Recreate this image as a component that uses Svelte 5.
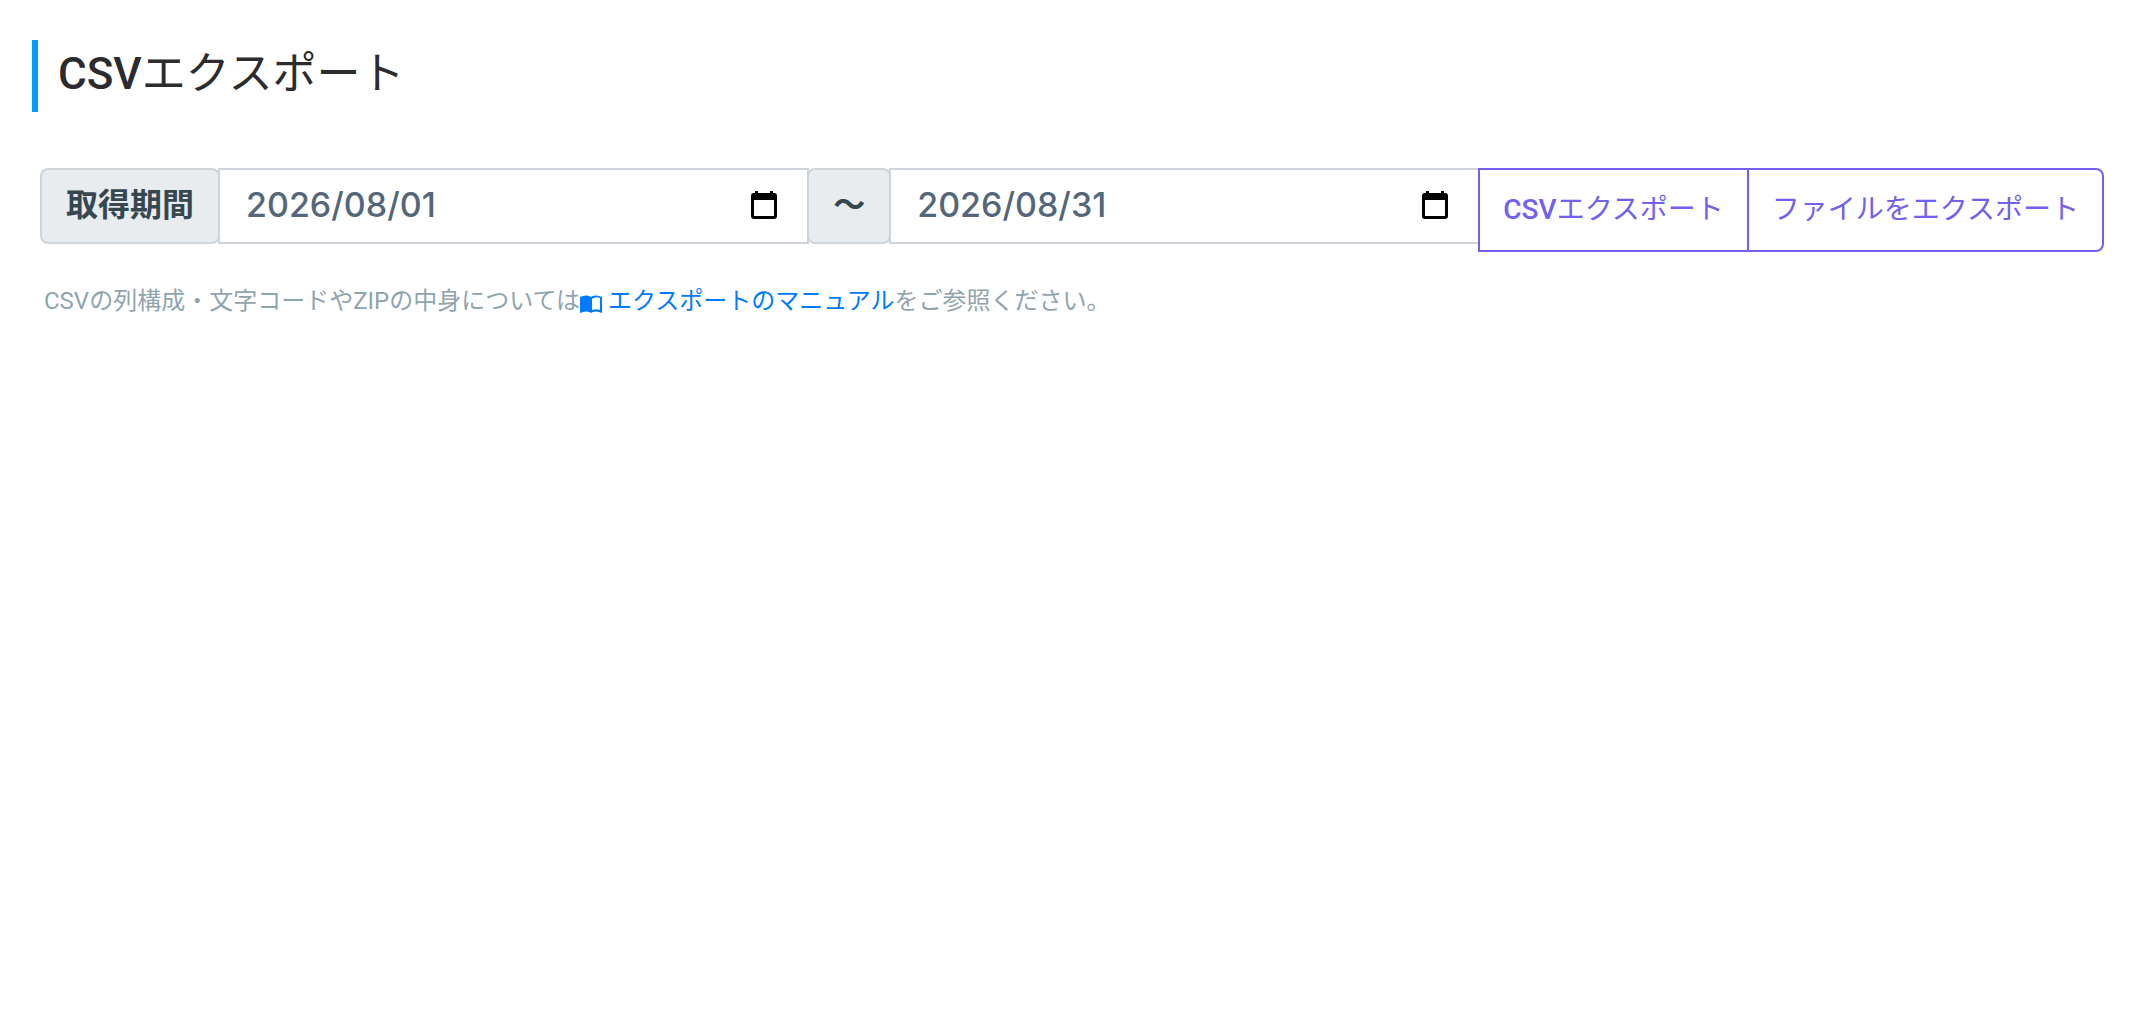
<script>
  let startDate = '2026/08/01';
  let endDate = '2026/08/31';
</script>

<svelte:head>
  <title>CSVエクスポート</title>
</svelte:head>

<main>
  <h1><span class="latin">CSV</span>エクスポート</h1>

  <form class="input-group" on:submit|preventDefault>
    <label class="addon" for="start-date">取得期間</label>
    <div class="date-field">
      <input id="start-date" type="text" bind:value={startDate}>
      <button type="button" class="picker" aria-label="開始日を選択">
        <svg viewBox="0 0 26 28" width="26" height="28">
          <path fill-rule="evenodd" d="M4 0h3v2h12V0h3v2h1a3 3 0 0 1 3 3v20a3 3 0 0 1-3 3H3a3 3 0 0 1-3-3V5a3 3 0 0 1 3-3h1zM3 9v16h20V9z" />
        </svg>
      </button>
    </div>
    <label class="addon" for="end-date">〜</label>
    <div class="date-field">
      <input id="end-date" type="text" bind:value={endDate}>
      <button type="button" class="picker" aria-label="終了日を選択">
        <svg viewBox="0 0 26 28" width="26" height="28">
          <path fill-rule="evenodd" d="M4 0h3v2h12V0h3v2h1a3 3 0 0 1 3 3v20a3 3 0 0 1-3 3H3a3 3 0 0 1-3-3V5a3 3 0 0 1 3-3h1zM3 9v16h20V9z" />
        </svg>
      </button>
    </div>
    <button type="submit" class="btn"><span class="latin">CSV</span>エクスポート</button>
    <button type="button" class="btn">ファイルをエクスポート</button>
  </form>

  <p class="help">CSVの列構成・文字コードやZIPの中身については<a href="#manual"><svg class="book" viewBox="0 0 22 18" width="22" height="18"><path fill-rule="evenodd" d="M0 2C4 0 8 0 11 2c3-2 7-2 11 0v16c-4-2-8-2-11 0-3-2-7-2-11 0zM12 4v11c3-1 5-1 8 0V3c-3-1-5-1-8 1z" /></svg>エクスポートのマニュアル</a>をご参照ください。</p>
</main>

<style>
  :global(body) {
    margin: 0;
    background: #fff;
  }

  main {
    padding: 40px 40px 40px 32px;
    font-family: Roboto, 'Noto Sans CJK JP', sans-serif;
  }

  h1 {
    box-sizing: border-box;
    margin: 0 0 56px;
    padding: 0 0 4px 20px;
    border-left: 6px solid #009efb;
    color: #2c2b2e;
    font-size: 44px;
    font-weight: 400;
    line-height: 68px;
  }

  .latin {
    font-weight: 500;
  }

  .input-group {
    display: flex;
    align-items: flex-start;
    margin-left: 8px;
  }

  /* neighbours share one border */
  .input-group > * + * {
    margin-left: -2px;
  }

  .addon,
  .date-field,
  .btn {
    box-sizing: border-box;
    border: 2px solid #ced4da;
    white-space: nowrap;
  }

  .addon {
    flex: none;
    height: 76px;
    padding: 0 24px;
    border-radius: 8px;
    background: #e8ecef;
    color: #37474f;
    font-size: 32px;
    font-weight: 700;
    line-height: 70px;
  }

  .date-field {
    display: flex;
    flex: 1;
    align-items: center;
    min-width: 0;
    height: 76px;
    padding: 0 30px 2px 26px;
    background: #fff;
  }

  .date-field input {
    flex: 1;
    min-width: 0;
    padding: 0;
    border: 0;
    outline: 0;
    background: none;
    color: #54667a;
    font-family: Inter, sans-serif;
    font-size: 34px;
    font-weight: 500;
    line-height: 40px;
  }

  .picker {
    display: flex;
    padding: 0;
    border: 0;
    background: none;
    color: #000;
    cursor: pointer;
  }

  .btn {
    position: relative;
    flex: none;
    height: 84px;
    padding: 0 23px;
    border-color: #7460ee;
    background: #fff;
    color: #7460ee;
    font-family: inherit;
    font-size: 28px;
    line-height: 40px;
    cursor: pointer;
  }

  .btn:last-child {
    border-radius: 0 8px 8px 0;
  }

  .help {
    margin: 31px 0 0 12px;
    color: #90a4ae;
    font-size: 24px;
    line-height: 36px;
  }

  .help a {
    color: #007bff;
    text-decoration: none;
  }

  .book {
    margin-right: 6px;
    vertical-align: -4px;
  }

  svg {
    fill: currentColor;
  }
</style>
